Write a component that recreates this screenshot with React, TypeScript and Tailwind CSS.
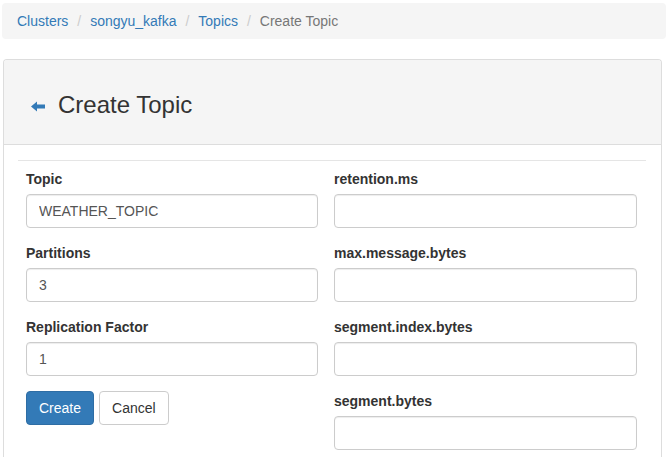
import React from 'react'

const leftFields = [
  { label: 'Topic', value: 'WEATHER_TOPIC' },
  { label: 'Partitions', value: '3' },
  { label: 'Replication Factor', value: '1' },
]

const rightFields = ['retention.ms', 'max.message.bytes', 'segment.index.bytes', 'segment.bytes']

function Field({ label, value = '' }: { label: string; value?: string }) {
  return (
    <div className="mb-[15px]">
      <label className="block mb-[5px] text-[14px] leading-[20px] font-bold text-[#333]">{label}</label>
      <input
        readOnly
        value={value}
        className="block w-full h-[34px] px-[12px] py-[6px] text-[14px] leading-[20px] text-[#555] bg-white border border-[#ccc] rounded-[4px] shadow-[inset_0_1px_1px_rgba(0,0,0,0.075)] outline-none"
      />
    </div>
  )
}

function ArrowLeft() {
  return (
    <svg width="14" height="11" viewBox="0 0 14 11" className="block">
      <path d="M0 5.5 L6 0.5 L6 3.5 L14 3.5 L14 7.5 L6 7.5 L6 10.5 Z" fill="#337ab7" />
    </svg>
  )
}

export default function App() {
  const crumbs = ['Clusters', 'songyu_kafka', 'Topics']

  return (
    <div className="min-h-screen bg-white pl-[2px] pt-[3px] font-['Liberation_Sans',Arial,sans-serif] text-[14px] text-[#333]">
      <ol className="flex items-center w-[664px] h-[36px] px-[15px] py-[8px] bg-[#f5f5f5] rounded-[4px] leading-[20px]">
        {crumbs.map((c) => (
          <li key={c} className="flex items-center">
            <a className="text-[#337ab7]">{c}</a>
            <span className="ml-[4px] px-[5px] text-[#ccc]">/&nbsp;</span>
          </li>
        ))}
        <li className="text-[#777]">Create Topic</li>
      </ol>

      <div className="mt-[20px] ml-[1px] w-[659px] h-[420px] border border-[#ddd] border-b-0 rounded-t-[4px] bg-white">
        <div className="h-[85px] bg-[#f5f5f5] border-b border-[#ddd] rounded-t-[3px] pt-[32px] pl-[27px]">
          <div className="flex items-center h-[26px]">
            <span className="mt-[2px]">
              <ArrowLeft />
            </span>
            <h3 className="ml-[13px] text-[24px] leading-[26px] text-[#333]">Create Topic</h3>
          </div>
        </div>

        <div className="pt-[15px]">
          <hr className="ml-[14px] w-[628px] border-0 border-t border-[#e5e5e5]" />
          <form className="flex gap-[16px] pl-[22px] pt-[8px]">
            <div className="w-[292px]">
              {leftFields.map((f) => (
                <Field key={f.label} label={f.label} value={f.value} />
              ))}
              <div className="flex gap-[5px]">
                <button
                  type="button"
                  className="h-[34px] px-[12px] text-[14px] leading-[20px] text-white bg-[#337ab7] border border-[#2e6da4] rounded-[4px]"
                >
                  Create
                </button>
                <button
                  type="button"
                  className="h-[34px] px-[12px] text-[14px] leading-[20px] text-[#333] bg-white border border-[#ccc] rounded-[4px]"
                >
                  Cancel
                </button>
              </div>
            </div>
            <div className="w-[303px]">
              {rightFields.map((f) => (
                <Field key={f} label={f} />
              ))}
            </div>
          </form>
        </div>
      </div>
    </div>
  )
}
